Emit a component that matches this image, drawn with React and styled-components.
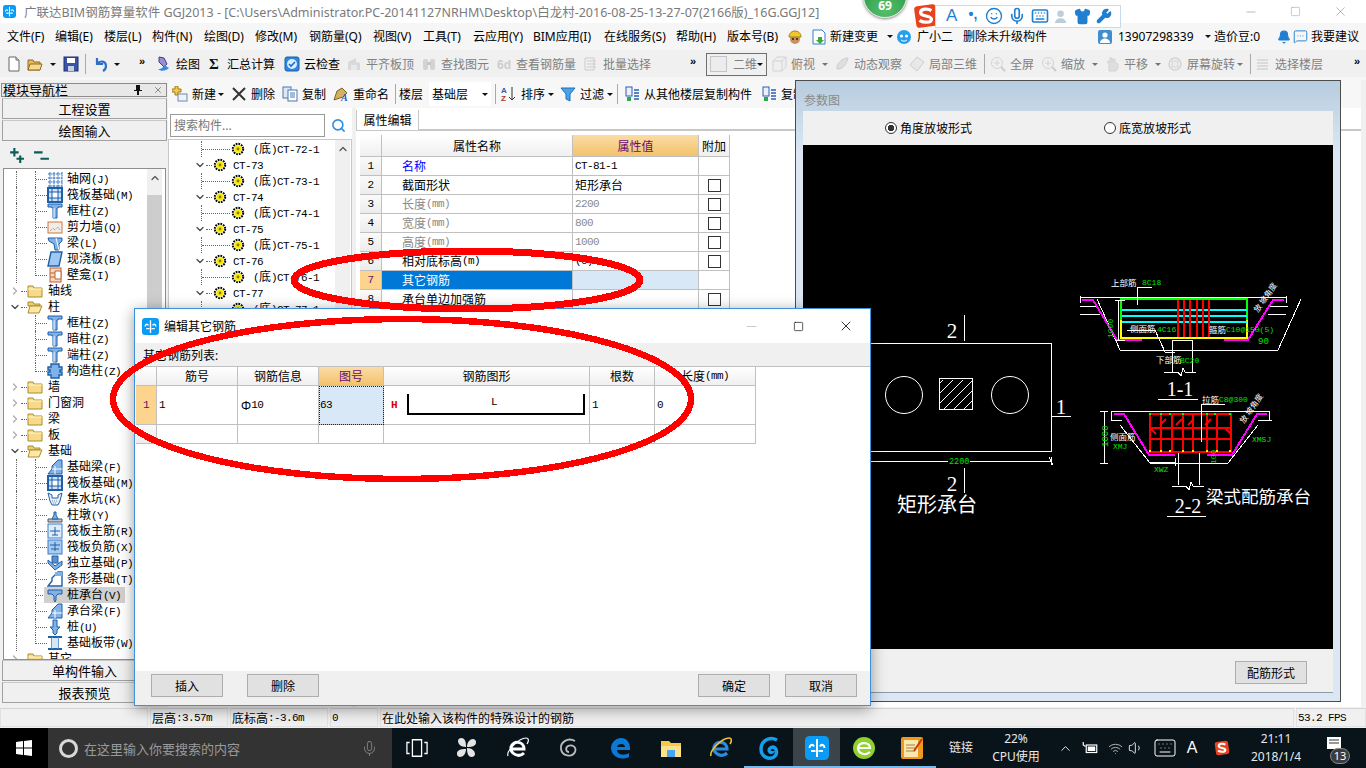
import React from 'react';
import styled, { createGlobalStyle } from 'styled-components';
import { Minus, Square, X, ChevronDown, ChevronRight, ChevronUp, Search, Mic, Bell, MessageSquareMore, Wrench, Shirt, Keyboard, Smile, Volume1, Wifi } from 'lucide-react';

const Global = createGlobalStyle`
    html, body { margin: 0; padding: 0; background: #f0f0f0; overflow: hidden; }
    body { font-family: "Noto Sans", "Noto Sans CJK SC", sans-serif; font-size: 12px; color: #000; }
    * { box-sizing: border-box; }
`;

const Screen = styled.div`
    position: relative;
    display: flex;
    flex-direction: column;
    width: 1366px;
    height: 768px;
    overflow: hidden;
    background: #f0f0f0;
`;

const TitleBar = styled.div`
    display: flex;
    align-items: center;
    height: 23px;
    padding-left: 3px;
    background: #fff;
    white-space: nowrap;
`;

const TitleText = styled.span`
    flex: 1;
    margin-left: 8px;
    font-size: 12.5px;
    color: #7a7a7a;
`;

const WinControls = styled.div`
    display: flex;
    align-items: center;
    color: #8a8a8a;
    padding-right: 18px;
    gap: 32px;
`;

const MenuBar = styled.div`
    display: flex;
    align-items: center;
    height: 27px;
    background: #f6f6f6;
    white-space: nowrap;
`;

const MenuItem = styled.div`
    display: flex;
    align-items: center;
    flex: none;
    gap: ${p => p.$gap || 3}px;
    width: ${p => p.$w}px;
    font-size: 12px;
    line-height: 16px;
`;

const ToolBand = styled.div`
    display: flex;
    align-items: center;
    height: 30px;
    padding: 0 0 2px ${p => p.$pad || 0}px;
    background: linear-gradient(#f0f0f0 90%, #f6f6f6 90%);
    white-space: nowrap;
`;

const Tool = styled.div`
    display: flex;
    align-items: center;
    flex: none;
    gap: 4px;
    width: ${p => p.$w}px;
    height: 24px;
    font-size: 12px;
    color: ${p => (p.$off ? '#808080' : '#000')};
`;

const ToolIcon = styled.span`
    display: flex;
    flex: none;
    opacity: ${p => (p.$off ? 0.4 : 1)};
`;

const Caret = styled.span`
    width: 0;
    height: 0;
    border-left: 3px solid transparent;
    border-right: 3px solid transparent;
    border-top: 3px solid ${p => (p.$off ? '#777' : '#111')};
`;

const Sep = styled.span`
    display: block;
    width: 1px;
    height: 20px;
    background: #a8a8a8;
`;

const MoreMark = styled.span`
    font-family: "Liberation Sans", sans-serif;
    font-size: 11px;
    font-weight: 700;
    letter-spacing: -1px;
    margin-top: -6px;
`;

const ModeCombo = styled.div`
    display: flex;
    align-items: center;
    justify-content: space-between;
    width: 61px;
    height: 23px;
    padding: 0 5px 0 3px;
    border: 1px solid #6f6f6f;
    color: #808080;
`;

const ModeBox = styled.span`
    display: flex;
    align-items: center;
    gap: 6px;
    &::before {
        content: "";
        width: 15px;
        height: 14px;
        background: #ececec;
        border: 1px solid #c4c4c4;
    }
`;

const Workspace = styled.div`
    position: relative;
    display: flex;
    height: 627px;
`;

const LeftNav = styled.div`
    display: flex;
    flex-direction: column;
    flex: none;
    width: 168px;
    padding: 3px 1px 0;
`;

const NavHeader = styled.div`
    display: flex;
    align-items: center;
    height: 14px;
    margin-bottom: 1px;
    padding: 0 3px 0 1px;
    background: #e8e8e8;
    border: 1px solid #8c8c8c;
    font-size: 13px;
    line-height: 12px;
`;

const NavHeaderText = styled.span`
    flex: 1;
`;

const NavButton = styled.div`
    display: flex;
    align-items: center;
    justify-content: center;
    flex: none;
    height: 21px;
    margin: 0 0 1px 1px;
    background: #f0f0f0;
    border: 1px solid #a0a0a0;
    border-top-color: #c8c8c8;
    font-size: 13px;
`;

const NavTools = styled.div`
    display: flex;
    align-items: center;
    gap: 8px;
    flex: none;
    height: 26px;
    padding-left: 7px;
`;

const NavTree = styled.div`
    position: relative;
    flex: none;
    height: 492px;
    margin: 0 1px 0 2px;
    padding-top: 2px;
    overflow: hidden;
    background: #fff;
    border: 1px solid #8e8e8e;
`;

const TreeRow = styled.div`
    position: relative;
    display: flex;
    align-items: center;
    height: 16px;
    padding-left: ${p => p.$pad}px;
    white-space: nowrap;
    &::before {
        content: "";
        display: ${p => (p.$trunk ? 'block' : 'none')};
        position: absolute;
        left: 12px;
        top: 0;
        bottom: 0;
        border-left: 1px dotted #666;
    }
`;

const ChildLink = styled.span`
    position: absolute;
    left: ${p => p.$x}px;
    top: 0;
    width: ${p => p.$w}px;
    height: ${p => (p.$last ? 9 : 16)}px;
    border-left: 1px dotted #666;
    &::after {
        content: "";
        position: absolute;
        left: 0;
        right: 0;
        top: 8px;
        border-top: 1px dotted #666;
    }
`;

const RowLabel = styled.span`
    position: relative;
    display: flex;
    align-items: center;
    height: 16px;
    padding-left: 3px;
    width: ${p => (p.$sel ? '81px' : 'auto')};
    background: ${p => (p.$sel ? '#d0d0d0' : 'transparent')};
`;

const RowText = styled.span`
    margin-left: ${p => p.$gap}px;
    font-size: 12px;
    line-height: 16px;
    color: ${p => p.$color || '#000'};
`;

const Ascii = styled.span`
    font-family: "Liberation Mono", monospace;
    font-size: 11px;
    letter-spacing: -0.6px;
`;

const DotLead = styled.span`
    width: 6px;
    border-top: 1px dotted #666;
`;

const ScrollTrack = styled.div`
    position: absolute;
    top: 0;
    right: ${p => p.$right}px;
    bottom: 0;
    display: flex;
    flex-direction: column;
    align-items: center;
    width: 15px;
    padding-top: 3px;
    background: #f0f0f0;
    color: #555;
`;

const ScrollThumb = styled.span`
    display: block;
    width: 15px;
    height: 300px;
    margin-top: 11px;
    background: #cdcdcd;
`;

const RightSide = styled.div`
    display: flex;
    flex-direction: column;
    flex: none;
    width: 1193px;
`;

const SubBar = styled.div`
    display: flex;
    align-items: center;
    flex: none;
    height: 28px;
    padding-left: 4px;
    background: #f7f7f7;
    white-space: nowrap;
`;

const FloorCombo = styled.div`
    display: flex;
    align-items: center;
    justify-content: space-between;
    width: 62px;
    height: 24px;
    padding: 0 3px 0 3px;
    background: #fff;
`;

const Panes = styled.div`
    display: flex;
    flex: 1;
    gap: 4px;
`;

const ListPane = styled.div`
    flex: none;
    width: 184px;
    background: #fff;
`;

const SearchRow = styled.div`
    display: flex;
    align-items: center;
    height: 31px;
    padding: 6px 0 2px 2px;
`;

const SearchInput = styled.div`
    display: flex;
    align-items: center;
    width: 155px;
    height: 23px;
    padding: 0 0 2px 3px;
    border: 1px solid #9a9a9a;
    color: #777;
    font-size: 12px;
`;

const SearchIcon = styled.span`
    display: flex;
    margin-left: 6px;
    color: #2f8fe0;
`;

const ListTree = styled.div`
    position: relative;
    height: 200px;
    padding-top: 1px;
    overflow: hidden;
    border: 1px solid #c8c8c8;
`;

const PropPane = styled.div`
    flex: 1;
    padding: 2px 0 0 0;
    background: #fff;
`;

const PropTabs = styled.div`
    display: flex;
    height: 20px;
    border-bottom: 1px solid #c8c8c8;
`;

const PropTab = styled.div`
    display: flex;
    align-items: center;
    justify-content: center;
    width: 63px;
    border-right: 1px solid #c8c8c8;
    border-left: 1px solid #c8c8c8;
    margin-bottom: -1px;
    background: #fff;
`;

const PropBody = styled.div`
    padding: 4px 0 0 4px;
    border-top: 1px solid #c8c8c8;
    margin: 0;
`;

const CellGrid = styled.div`
    display: grid;
    grid-template-columns: ${p => p.$cols};
    grid-template-rows: ${p => p.$rows};
    width: fit-content;
`;

const HeadCell = styled.div`
    display: flex;
    align-items: center;
    justify-content: center;
    background: ${p => (p.$hot ? 'linear-gradient(#fbdca5, #f3c26c)' : 'linear-gradient(#fff, #efefef)')};
    border-right: 1px solid #c0c0c0;
    border-bottom: 1px solid #c0c0c0;
    color: ${p => (p.$hot ? '#6a0a78' : '#000')};
    font-size: 12px;
`;

const RowHead = styled.div`
    display: flex;
    align-items: center;
    justify-content: center;
    background: ${p => (p.$hot ? '#fdd48e' : 'linear-gradient(#fafafa, #ececec)')};
    border-right: 1px solid #c0c0c0;
    border-bottom: 1px solid #c0c0c0;
    color: ${p => (p.$hot ? '#6a0a78' : '#000')};
`;

const Cell = styled.div`
    display: flex;
    align-items: center;
    justify-content: ${p => (p.$mid ? 'center' : 'flex-start')};
    padding-left: ${p => p.$pad || 0}px;
    background: ${p => p.$bg || '#fff'};
    border-right: 1px solid #c0c0c0;
    border-bottom: 1px solid #c0c0c0;
    color: ${p => p.$color || '#000'};
    outline: ${p => (p.$focus ? '1px dotted #222' : 'none')};
    outline-offset: -1px;
    white-space: nowrap;
`;

const Check = styled.span`
    display: block;
    width: 13px;
    height: 13px;
    background: #fff;
    border: 1px solid #333;
`;

const ParamWindow = styled.div`
    position: absolute;
    left: 795px;
    top: 0;
    display: flex;
    flex-direction: column;
    width: 546px;
    height: 622px;
    padding: 0 7px;
    background: linear-gradient(#b7ccdf, #dbe8f4 12%);
    border: 1px solid #4c4c4c;
`;

const ParamTitle = styled.div`
    display: flex;
    align-items: center;
    flex: none;
    height: 30px;
    padding: 7px 0 0 1px;
    color: #8a8a8a;
`;

const RadioBand = styled.div`
    display: flex;
    align-items: center;
    flex: none;
    height: 34px;
    padding-left: 82px;
    background: #f0f0f0;
`;

const RadioItem = styled.div`
    display: flex;
    align-items: center;
    gap: 3px;
    width: 219px;
`;

const RadioDot = styled.span`
    width: 12px;
    height: 12px;
    border: 1px solid #333;
    border-radius: 50%;
    background: ${p => (p.$on ? 'radial-gradient(circle, #333 0 3px, #fff 3.5px)' : '#fff')};
`;

const CadCanvas = styled.div`
    flex: none;
    height: 504px;
    background: #000;
    svg { display: block; }
`;

const ParamFoot = styled.div`
    display: flex;
    justify-content: flex-end;
    flex: none;
    height: 44px;
    padding: 12px 26px 0 0;
    background: #f0f0f0;
    border-bottom: 1px solid #8e9aa6;
`;

const PlainButton = styled.div`
    display: flex;
    align-items: center;
    justify-content: center;
    width: 72px;
    height: 23px;
    background: #e1e1e1;
    border: 1px solid #adadad;
    font-size: 12px;
`;

const EditWindow = styled.div`
    position: absolute;
    left: 134px;
    top: 228px;
    display: flex;
    flex-direction: column;
    width: 737px;
    height: 398px;
    background: #fff;
    border: 1px solid #3f90dc;
    box-shadow: 0 3px 14px rgba(0, 0, 0, 0.4);
`;

const EditTitle = styled.div`
    display: flex;
    align-items: center;
    flex: none;
    height: 34px;
    padding-left: 7px;
    gap: 5px;
`;

const EditTitleText = styled.span`
    flex: 1;
    font-size: 12px;
`;

const EditControls = styled.div`
    display: flex;
    align-items: center;
    gap: 34px;
    padding-right: 16px;
`;

const ListCaption = styled.div`
    display: flex;
    align-items: center;
    flex: none;
    height: 23px;
    padding-left: 8px;
    background: #f0f0f0;
`;

const EditBody = styled.div`
    flex: 1;
    padding: 0 0 0 1px;
    border-top: 1px solid #c0c0c0;
`;

const ShapeCell = styled(Cell)`
    padding-left: 7px;
    gap: 9px;
`;

const HookMark = styled.span`
    font-family: "Liberation Mono", monospace;
    font-size: 11px;
    font-weight: 700;
    color: #e00000;
`;

const EditFoot = styled.div`
    display: flex;
    align-items: flex-start;
    justify-content: space-between;
    flex: none;
    height: 34px;
    padding: 3px 13px 0 16px;
    background: #f0f0f0;
`;

const FootGroup = styled.div`
    display: flex;
    gap: ${p => p.$gap}px;
`;

const StatusBar = styled.div`
    display: flex;
    gap: 2px;
    height: 21px;
    padding: 1px 0 1px 0;
    background: #f0f0f0;
`;

const StatusCell = styled.div`
    display: flex;
    align-items: center;
    flex: ${p => (p.$w ? 'none' : 1)};
    width: ${p => p.$w}px;
    padding-left: 1px;
    border: 1px solid #e0e0e0;
    border-top-color: #d4d4d4;
    white-space: nowrap;
`;

const TaskBar = styled.div`
    display: flex;
    align-items: stretch;
    height: 40px;
    background: #08131a;
    color: #fff;
    white-space: nowrap;
`;

const StartButton = styled.div`
    display: flex;
    align-items: center;
    justify-content: center;
    flex: none;
    width: 48px;
    background: #000;
`;

const TaskSearch = styled.div`
    display: flex;
    align-items: center;
    flex: none;
    width: 344px;
    padding: 0 14px 0 11px;
    background: #333;
    color: #9a9a9a;
    font-size: 13px;
`;

const CortanaRing = styled.span`
    flex: none;
    width: 19px;
    height: 19px;
    margin-right: 6px;
    border: 3px solid #d8d8d8;
    border-radius: 50%;
`;

const SearchHint = styled.span`
    flex: 1;
`;

const TaskSlot = styled.div`
    display: flex;
    align-items: center;
    justify-content: center;
    flex: none;
    width: ${p => p.$w}px;
    background: ${p => (p.$active ? '#3b4549' : 'transparent')};
    box-shadow: ${p => (p.$run ? 'inset 0 -2px 0 #76b9ed' : 'none')};
`;

const TrayLetter = styled(TaskSlot)`
    font-family: "Liberation Sans", sans-serif;
    font-size: 16px;
`;

const TaskText = styled.div`
    display: flex;
    flex-direction: column;
    align-items: center;
    justify-content: center;
    flex: none;
    width: ${p => p.$w}px;
    font-size: 12px;
    line-height: 18px;
    color: #e8e8e8;
`;

const NoticeWrap = styled.div`
    position: relative;
    display: flex;
    align-items: center;
    justify-content: center;
    flex: none;
    width: 56px;
    svg { margin-top: -10px; }
`;

const NoticeBadge = styled.span`
    position: absolute;
    left: 24px;
    top: 20px;
    width: 20px;
    height: 16px;
    border-radius: 8px;
    background: #3c3c3c;
    border: 1px solid #888;
    font-size: 11px;
    line-height: 14px;
    text-align: center;
    color: #fff;
`;

const InkLayer = styled.svg`
    position: absolute;
    left: 0;
    top: 0;
    pointer-events: none;
`;

const ScoreBall = styled.div`
    position: absolute;
    left: 863px;
    top: -26px;
    display: flex;
    align-items: flex-end;
    justify-content: center;
    width: 44px;
    height: 44px;
    padding-bottom: 3px;
    border-radius: 50%;
    background: radial-gradient(circle at 50% 85%, #55c06a, #2f9a4a 70%);
    border: 1px solid #d9e6da;
    box-shadow: 0 1px 3px rgba(0, 0, 0, 0.5);
    color: #fff;
    font-size: 12px;
    font-weight: 700;
`;

const SogouBar = styled.div`
    position: absolute;
    left: 913px;
    top: 3px;
    display: flex;
    align-items: center;
`;

const SogouStrip = styled.div`
    display: flex;
    align-items: center;
    gap: 5px;
    height: 23px;
    margin-left: -4px;
    padding: 0 2px 0 10px;
    width: 186px;
    background: #fff;
    border: 1px solid #c6dcee;
    color: #1f7fd0;
`;

const SogouA = styled.span`
    width: 15px;
    font-family: "Liberation Sans", sans-serif;
    font-size: 17px;
    line-height: 20px;
    color: #1f7fd0;
`;

const SogouPunct = styled.span`
    width: 14px;
    font-family: "Liberation Sans", sans-serif;
    font-size: 14px;
    font-weight: 700;
    text-align: center;
    margin-top: -5px;
`;

const FadedIcon = styled.span`
    display: flex;
    opacity: 0.45;
`;

const Sim = ({ children }) => (
    <>
        {String(children).split(/([\x00-\x7f]+)/).map((part, i) =>
            /^[\x00-\x7f]+$/.test(part) ? <Ascii key={i}>{part}</Ascii> : part
        )}
    </>
);

const B = '#1f5fa8';
const L = '#7fb2e8';
const glyphs = {
    newDoc: <><path d="M3 1h7l3 3v11H3z" fill="#fff" stroke="#666" /><path d="M10 1v3h3" fill="#ddd" stroke="#666" /></>,
    open: <><path d="M1 4h5l1 2h6v8H1z" fill="#e6b95e" stroke="#8f6b22" /><path d="M3 8h12l-2 6H1z" fill="#f6d88f" stroke="#8f6b22" /></>,
    save: <><rect x="1" y="1" width="14" height="14" fill="#3a55a8" stroke="#1e2f70" /><rect x="4" y="2" width="8" height="5" fill="#fff" /><rect x="5" y="10" width="6" height="5" fill="#c8d0e8" /></>,
    undo: <path d="M4 2v6h6M4 8c3-4 9-3 9 2 0 2-1 4-3 5" fill="none" stroke="#2f6fc8" strokeWidth="2.2" />,
    brush: <><path d="M3 1l5 1 3 6-3 3-5-5z" fill="#9a8ed0" stroke="#443a8a" /><path d="M2 13c3 3 8 2 11-1-2-1-3-2-4-3l-3 3c-1 1-3 1-4 1z" fill="#3a88e0" /></>,
    sigma: <text x="2" y="13" fontFamily="Liberation Serif, serif" fontWeight="700" fontSize="15" fill="#111">Σ</text>,
    cloud: <><rect x="1" y="1" width="14" height="14" rx="2" fill="#2b87dd" stroke="#1a5ea8" /><circle cx="8" cy="8" r="5" fill="#d7ecff" /><path d="M5 8l2 2 4-4" fill="none" stroke="#1a6fc8" strokeWidth="1.6" /></>,
    level: <><path d="M2 14V6l8-4v4l4 1v7z" fill="#b8b8b8" /><path d="M5 14V9h6v5z" fill="#e0e0e0" /></>,
    binoc: <><rect x="2" y="3" width="5" height="11" rx="2" fill="#a8a8a8" /><rect x="9" y="3" width="5" height="11" rx="2" fill="#a8a8a8" /><rect x="6" y="6" width="4" height="3" fill="#888" /></>,
    rebarQty: <text x="1" y="13" fontFamily="Liberation Sans, sans-serif" fontSize="12" fontWeight="700" fill="#999">6d</text>,
    batch: <><path d="M2 2h9v12H2z" fill="#eee" stroke="#999" /><path d="M4 5h9M4 8h9M4 11h9" stroke="#999" /></>,
    cube: <><path d="M2 5l4-4h9v10l-4 4H2z" fill="#eee" stroke="#aaa" /><path d="M2 5h9v10M11 5l4-4" fill="none" stroke="#aaa" /></>,
    orbit: <path d="M3 13c-1-5 5-11 11-11-1 6-6 12-11 11z" fill="#c4c4c4" stroke="#999" />,
    box3d: <path d="M8 1l7 5-7 9-7-6z" fill="#ddd" stroke="#999" />,
    lens: <><circle cx="7" cy="7" r="5.5" fill="#eef2f6" stroke="#aaa" /><path d="M11 11l4 4" stroke="#999" strokeWidth="2" /><path d="M4 7h6M7 4v6" stroke="#aaa" /></>,
    hand: <path d="M5 15V8l-2-2 2-1 1 1V2h2v4h1V3h2v4h1l2 1v4l-2 3z" fill="#c4c4c4" stroke="#aaa" />,
    rotate: <><circle cx="8" cy="8" r="6" fill="none" stroke="#aaa" strokeWidth="1.5" /><rect x="5" y="5" width="6" height="6" fill="#e4e4e4" stroke="#aaa" /></>,
    layers: <path d="M2 4h11M2 7h11M2 10h11M2 13h11" stroke="#aaa" strokeWidth="1.5" />,
    newItem: <><path d="M3 0h3v3h3v3H6v3H3V6H0V3h3z" fill="#f2c84a" stroke="#9c7c20" /><rect x="6" y="8" width="9" height="7" fill="#eef3fa" stroke="#6b8ab0" /></>,
    cross: <path d="M2 2l12 12M14 2L2 14" stroke="#333" strokeWidth="2" />,
    copy: <><rect x="1" y="1" width="8" height="11" fill="#dce8f6" stroke="#4a78b0" /><rect x="6" y="4" width="9" height="11" fill="#fff" stroke="#4a78b0" /><path d="M8 7h5M8 9h5M8 11h5" stroke="#4a78b0" /></>,
    rename: <><path d="M1 14l3-9 5-3 5 5-4 4z" fill="#d4b060" stroke="#7a6426" /><text x="8" y="15" fontFamily="Liberation Serif, serif" fontStyle="italic" fontWeight="700" fontSize="10" fill="#2b5fb8">A</text></>,
    sort: <><text x="0" y="7" fontFamily="Liberation Sans, sans-serif" fontWeight="700" fontSize="8" fill="#2b5fb8">A</text><text x="0" y="15" fontFamily="Liberation Sans, sans-serif" fontWeight="700" fontSize="8" fill="#b03030">Z</text><path d="M11 1v13M8 11l3 3 3-3" fill="none" stroke="#333" /></>,
    funnel: <path d="M1 2h14l-5 6v7l-4-2V8z" fill="#4aa2e8" stroke="#1f6fb8" />,
    fromFloor: <><rect x="2" y="1" width="6" height="9" fill="#eef" stroke="#2b5fb8" /><rect x="3" y="11" width="4" height="4" fill="#2ea84a" /><path d="M10 4h5M10 7h5M10 10h5M10 13h5" stroke="#2b5fb8" strokeWidth="1.6" /></>,
    plusPlus: <path d="M2 5h8M6 1v8M8 11h7M11.500 8v7" stroke="#0b5b5b" strokeWidth="2" />,
    minusMinus: <path d="M1 5h8M7 11h8" stroke="#0b5b5b" strokeWidth="2" />,
    grid: <path d="M1 3h14M1 7h14M1 11h14M1 15h14M3 1v15M7 1v15M11 1v15M15 1v15" stroke="#2d6cc0" fill="none" strokeDasharray="2 0.600" />,
    raft: <><rect x="1" y="1" width="14" height="14" fill="#cfe2f8" stroke={B} strokeWidth="2" /><rect x="5" y="5" width="6" height="6" fill="#fff" stroke={B} /><path d="M1 5h4M11 5h4M1 11h4M11 11h4M5 1v4M11 1v4M5 11v4M11 11v4" stroke={B} /></>,
    tCol: <><path d="M1 1h14v3H11v1H10v10H6V5H5V4H1z" fill={L} stroke={B} /><path d="M7 5v10" stroke="#fff" /></>,
    shear: <><rect x="1" y="3" width="14" height="11" fill="#f0ece8" stroke="#d07840" /><path d="M3 12l3-3 2 2 3-3 2 3" stroke="#888" strokeDasharray="1 1" fill="none" /></>,
    beam: <><path d="M1 3h14v3l-3 3v6H8l-1-6-5-3z" fill={L} stroke={B} /><path d="M9 3l3 12" stroke="#fff" /></>,
    slab: <path d="M4 1h11l-3 14H1z" fill="#9fc8f2" stroke={B} strokeWidth="1.4" />,
    niche: <><rect x="3" y="1" width="11" height="14" fill="#f4d8c0" stroke="#c06030" /><path d="M8 4h6v8H8z" fill="#fff" stroke="#c06030" /><path d="M3 6h5M3 10h5" stroke="#c06030" /></>,
    gearCol: <path d="M4 1h8v3h3v3h-2v2h2v3h-3v3H4v-3H1V9h2V7H1V4h3z" fill={L} stroke={B} strokeWidth="1.4" />,
    foundBeam: <><path d="M1 15l4-5V7l6-6h4v14z" fill={L} stroke={B} /><path d="M8 15V7M5 10h10" stroke="#fff" /></>,
    pit: <><path d="M1 2l4 2v3h6V4l4-2-2 8-2 4H5l-2-4z" fill="#e4f0fc" stroke={B} /><path d="M5 10h6M6 12h4" stroke="#888" strokeDasharray="1 1" /></>,
    pier: <><path d="M1 12h14v3H1z" fill="#b8c8dc" stroke="#555" /><path d="M5 12l2-4V5h2v3l2 4z" fill={L} stroke={B} /></>,
    mainBar: <><rect x="1" y="1" width="14" height="14" fill="#dfedfb" stroke="#3a7cc8" /><path d="M3 8h10M8 4v8M5 12h6" stroke={B} /></>,
    negBar: <><rect x="1" y="1" width="14" height="14" fill="#a8ccf0" stroke="#3a7cc8" /><path d="M3 6h10M8 3v9M4 10h8" stroke={B} /></>,
    isoFoot: <><path d="M1 8l7 7 7-5V6L8 11 1 5z" fill={L} stroke={B} /><path d="M5 1h6v7H5z" fill="#5a90d0" stroke={B} /></>,
    stripFoot: <><path d="M1 15l4-5V7l6-6h4v14z" fill="#fff" stroke={B} strokeWidth="1.4" /><path d="M8 1h7v4H8z" fill={L} /></>,
    capFoot: <><path d="M1 3h14v4H11l-2 2v4l-1 2-1-2V9L5 7H1z" fill={L} stroke={B} /></>,
    pile: <><path d="M6 1h4v7h3l-3 3v3l-2 2-2-2v-3L3 8h3z" fill={L} stroke={B} /></>,
    band: <><path d="M1 2h14M1 14h14" stroke={B} strokeWidth="2" /><path d="M5 2v12M11 2v12" stroke="#3a7cc8" strokeWidth="1.5" /><rect x="5" y="3" width="6" height="10" fill="#d5e6f8" /></>,
    folder: <><path d="M1 3h5l1 2h8v9H1z" fill="#f6dc88" stroke="#b08a2c" /><path d="M1 6h14" stroke="#fff6c8" /></>,
    folderOpen: <><path d="M1 3h5l1 2h6v2H1z" fill="#eccc78" stroke="#b08a2c" /><path d="M3 7h12l-3 7H1z" fill="#fbe8a8" stroke="#b08a2c" /></>,
    gear: <><circle cx="8" cy="8" r="5.200" fill="none" stroke="#000" strokeWidth="2" strokeDasharray="1.700 1" /><circle cx="8" cy="8" r="3.800" fill="#f5ec00" /><circle cx="8" cy="8" r="1.400" fill="#8a7c00" /></>,
    helmet: <><circle cx="8" cy="10" r="5" fill="#c8915f" /><path d="M2 8c0-8 12-8 12 0z" fill="#f2c62e" stroke="#a08010" /><circle cx="6" cy="10" r="1" fill="#222" /><circle cx="10" cy="10" r="1" fill="#222" /></>,
    docGo: <><path d="M2 1h9l3 3v11H2z" fill="#fff" stroke="#3a7cc8" /><path d="M7 8h4v3h2l-4 4-4-4h2z" fill="#3aa83a" /></>,
    robot: <><circle cx="8" cy="8" r="7" fill="#25a0ef" /><circle cx="5.500" cy="7" r="1.600" fill="#fff" /><circle cx="10.500" cy="7" r="1.600" fill="#fff" /><path d="M5 11c2 1.500 4 1.500 6 0" stroke="#fff" fill="none" /></>,
    account: <><rect x="1" y="1" width="14" height="14" rx="2" fill="#3f8fd0" /><circle cx="8" cy="6" r="2.600" fill="#fff" /><path d="M3 14c0-6 10-6 10 0z" fill="#fff" /></>,
    person: <><circle cx="7" cy="5" r="3.500" fill="#6f93b0" /><path d="M1 15c0-7 12-7 12 0z" fill="#6f93b0" /></>,
    glodon: <><rect x="0" y="0" width="16" height="16" rx="3" fill="#0a9bf5" /><path d="M8 2v12M3 8c0-2 2-3 3-1M13 8c0-2-2-3-3-1M4 10h3M9 10h3" stroke="#fff" strokeWidth="1.300" fill="none" /></>,
};

const Ico = ({ n, s = 16 }) => (
    <svg width={s} height={s} viewBox="0 0 16 16">{glyphs[n]}</svg>
);

const spaced = (items, end) =>
    items.map((it, i) => ({ ...it, w: (items[i + 1] ? items[i + 1].x : end) - it.x }));

const renderTool = (it, i) => {
    if (it.sep) return <Tool key={i} $w={it.w}><Sep /></Tool>;
    if (it.caret) return <Tool key={i} $w={it.w}><Caret $off={it.off} /></Tool>;
    if (it.more) return <Tool key={i} $w={it.w}><MoreMark>»</MoreMark></Tool>;
    if (it.mode) return <Tool key={i} $w={it.w}><ModeCombo><ModeBox>二维</ModeBox><Caret /></ModeCombo></Tool>;
    if (it.floor) return <Tool key={i} $w={it.w}><FloorCombo>基础层<Caret /></FloorCombo></Tool>;
    if (it.plain) return <Tool key={i} $w={it.w}>{it.plain}</Tool>;
    return (
        <Tool key={i} $w={it.w} $off={it.off}>
            <ToolIcon $off={it.off}><Ico n={it.i} /></ToolIcon>
            {it.t}
        </Tool>
    );
};

const mainTools = spaced([
    { x: 6, i: 'newDoc' }, { x: 27, i: 'open' }, { x: 50, caret: 1 }, { x: 63, i: 'save' }, { x: 85, sep: 1 },
    { x: 93, i: 'undo' }, { x: 114, caret: 1 }, { x: 139, more: 1 },
    { x: 156, i: 'brush', t: '绘图' }, { x: 207, i: 'sigma', t: '汇总计算' }, { x: 284, i: 'cloud', t: '云检查' },
    { x: 346, i: 'level', t: '平齐板顶', off: 1 }, { x: 421, i: 'binoc', t: '查找图元', off: 1 },
    { x: 496, i: 'rebarQty', t: '查看钢筋量', off: 1 }, { x: 583, i: 'batch', t: '批量选择', off: 1 },
    { x: 690, more: 1 }, { x: 706, mode: 1 }, { x: 771, i: 'cube', t: '俯视', off: 1 }, { x: 822, caret: 1, off: 1 },
    { x: 834, i: 'orbit', t: '动态观察', off: 1 }, { x: 909, i: 'box3d', t: '局部三维', off: 1 }, { x: 984, sep: 1 },
    { x: 990, i: 'lens', t: '全屏', off: 1 }, { x: 1041, i: 'lens', t: '缩放', off: 1 }, { x: 1092, caret: 1, off: 1 },
    { x: 1104, i: 'hand', t: '平移', off: 1 }, { x: 1155, caret: 1, off: 1 }, { x: 1167, i: 'rotate', t: '屏幕旋转', off: 1 },
    { x: 1237, caret: 1, off: 1 }, { x: 1250, sep: 1 }, { x: 1255, i: 'layers', t: '选择楼层', off: 1 }, { x: 1354, more: 1 },
], 1366);

const subTools = spaced([
    { x: 172, i: 'newItem', t: '新建' }, { x: 218, caret: 1 }, { x: 231, i: 'cross', t: '删除' }, { x: 282, i: 'copy', t: '复制' },
    { x: 333, i: 'rename', t: '重命名' }, { x: 395, sep: 1 }, { x: 399, plain: '楼层' }, { x: 429, floor: 1 }, { x: 495, sep: 1 },
    { x: 501, i: 'sort', t: '排序' }, { x: 548, caret: 1 }, { x: 560, i: 'funnel', t: '过滤' }, { x: 607, caret: 1 },
    { x: 617, sep: 1 }, { x: 624, i: 'fromFloor', t: '从其他楼层复制构件' }, { x: 761, i: 'fromFloor', t: '复制' },
], 810);

const menus = [
    ['文件(F)', 48], ['编辑(E)', 49], ['楼层(L)', 48], ['构件(N)', 52], ['绘图(D)', 51], ['修改(M)', 54], ['钢筋量(Q)', 64],
    ['视图(V)', 50], ['工具(T)', 50], ['云应用(Y)', 60], ['BIM应用(I)', 71], ['在线服务(S)', 72], ['帮助(H)', 51], ['版本号(B)', 60],
];

const navRows = [
    { k: 'c', i: 'grid', t: '轴网(J)', trunk: 1 }, { k: 'c', i: 'raft', t: '筏板基础(M)', trunk: 1 }, { k: 'c', i: 'tCol', t: '框柱(Z)', trunk: 1 },
    { k: 'c', i: 'shear', t: '剪力墙(Q)', trunk: 1 }, { k: 'c', i: 'beam', t: '梁(L)', trunk: 1 }, { k: 'c', i: 'slab', t: '现浇板(B)', trunk: 1 },
    { k: 'c', i: 'niche', t: '壁龛(I)', trunk: 1, last: 1 },
    { k: 'f', t: '轴线' }, { k: 'o', t: '柱' },
    { k: 'c', i: 'tCol', t: '框柱(Z)' }, { k: 'c', i: 'tCol', t: '暗柱(Z)' }, { k: 'c', i: 'tCol', t: '端柱(Z)' }, { k: 'c', i: 'gearCol', t: '构造柱(Z)', last: 1 },
    { k: 'f', t: '墙' }, { k: 'f', t: '门窗洞' }, { k: 'f', t: '梁' }, { k: 'f', t: '板' }, { k: 'o', t: '基础' },
    { k: 'c', i: 'foundBeam', t: '基础梁(F)', trunk: 1 }, { k: 'c', i: 'raft', t: '筏板基础(M)', trunk: 1 }, { k: 'c', i: 'pit', t: '集水坑(K)', trunk: 1 },
    { k: 'c', i: 'pier', t: '柱墩(Y)', trunk: 1 }, { k: 'c', i: 'mainBar', t: '筏板主筋(R)', trunk: 1 }, { k: 'c', i: 'negBar', t: '筏板负筋(X)', trunk: 1 },
    { k: 'c', i: 'isoFoot', t: '独立基础(P)', trunk: 1 }, { k: 'c', i: 'stripFoot', t: '条形基础(T)', trunk: 1 }, { k: 'c', i: 'capFoot', t: '桩承台(V)', trunk: 1, sel: 1 },
    { k: 'c', i: 'foundBeam', t: '承台梁(F)', trunk: 1 }, { k: 'c', i: 'pile', t: '桩(U)', trunk: 1 }, { k: 'c', i: 'band', t: '基础板带(W)', trunk: 1, last: 1 },
    { k: 'f', t: '其它' },
];

const NavTreeRow = ({ r }) => {
    if (r.k === 'c') {
        return (
            <TreeRow $pad={40} $trunk={r.trunk}>
                <ChildLink $x={31} $w={12} $last={r.last} />
                <RowLabel $sel={r.sel}>
                    <Ico n={r.i} />
                    <RowText $gap={4}><Sim>{r.t}</Sim></RowText>
                </RowLabel>
            </TreeRow>
        );
    }
    const Arrow = r.k === 'o' ? ChevronDown : ChevronRight;
    return (
        <TreeRow $pad={5}>
            <Arrow size={12} strokeWidth={2.400} color={r.k === 'o' ? '#444' : '#aaa'} />
            <DotLead />
            <Ico n={r.k === 'o' ? 'folderOpen' : 'folder'} />
            <RowText $gap={5}>{r.t}</RowText>
        </TreeRow>
    );
};

const ListRow = ({ name, child }) => (
    child ? (
        <TreeRow $pad={61}>
            <ChildLink $x={32} $w={29} />
            <Ico n="gear" />
            <RowText $gap={7}><Sim>{name}</Sim></RowText>
        </TreeRow>
    ) : (
        <TreeRow $pad={25}>
            <ChevronDown size={12} strokeWidth={2.400} color="#444" />
            <DotLead />
            <Ico n="gear" />
            <RowText $gap={5}><Sim>{name}</Sim></RowText>
        </TreeRow>
    )
);

const propRows = [
    ['名称', 'CT-81-1', null, '#0000ff'], ['截面形状', '矩形承台', 1], ['长度(mm)', '2200', 1, '#8a8a8a', 1], ['宽度(mm)', '800', 1, '#8a8a8a', 1],
    ['高度(mm)', '1000', 1, '#8a8a8a', 1], ['相对底标高(m)', '(0)', 1], ['其它钢筋', '', null, '#fff', 0, 1], ['承台单边加强筋', '', 1],
];

const Dim = styled.text`
    font-family: "Liberation Mono", monospace;
    font-size: ${p => p.$s || 8}px;
    fill: #00e000;
`;

const Note = styled.text`
    font-family: "Noto Sans CJK SC", sans-serif;
    font-size: ${p => p.$s || 8.500}px;
    fill: #fff;
`;

const Mark = styled.text`
    font-family: "Liberation Serif", serif;
    font-size: ${p => p.$s || 20}px;
    fill: #fff;
    text-anchor: middle;
`;

const Wire = ({ d, c = '#fff', w = 1 }) => (
    <path d={d} fill="none" stroke={c} strokeWidth={w} shapeRendering="crispEdges" />
);

const CadDrawing = () => (
    <svg width="530" height="504" viewBox="803 145 530 504">
        <defs>
            <clipPath id="hatchBox"><rect x="939" y="378" width="34" height="32" /></clipPath>
        </defs>
        {/* 矩形承台 plan */}
        <Wire d="M850 343H1051V451H850" />
        <circle cx="904" cy="395" r="18.500" fill="none" stroke="#fff" />
        <circle cx="1010" cy="395" r="18.500" fill="none" stroke="#fff" />
        <rect x="939.500" y="378.500" width="33" height="31" fill="none" stroke="#fff" />
        <g clipPath="url(#hatchBox)" stroke="#fff">
            {[1323, 1333, 1343, 1353, 1363, 1373].map(c => <line key={c} x1={c - 380} y1="380" x2={c - 410} y2="410" />)}
        </g>
        <Wire d="M964 315V341M1051 416H1071M964 468V493M850 461H1051M1049 457L1053 465M1051 457V465" />
        <Mark x="952" y="338" $s={21}>2</Mark>
        <Mark x="952" y="491" $s={21}>2</Mark>
        <Mark x="1061" y="414" $s={21}>1</Mark>
        <rect x="948" y="455" width="22" height="12" fill="#000" />
        <Dim x="949" y="464" $s={8.500}>2200</Dim>
        <Note x="897" y="512" $s={20}>矩形承台</Note>

        {/* 1-1 section */}
        <Wire d="M1080 297H1286M1080 296V303M1286 296V303" />
        <Wire d="M1097 299L1120 350H1278L1301 299M1080 306H1096M1270 306H1288M1080 314H1100M1268 314H1286" />
        <Wire d="M1082 300H1093L1117 340H1142M1284 300H1273L1248 340H1224" c="#ff00ff" w="2" />
        <Wire d="M1121 320V299H1247V320" c="#00ff00" w="2" />
        <Wire d="M1121 320V338H1247V320" c="#ffff00" w="2" />
        <Wire d="M1122 310H1247M1122 316H1247M1122 322H1247" c="#00ffff" w="2" />
        <Wire d="M1178 300V337M1184 300V337M1190 300V337M1197 300V337M1203 300V337M1209 300V337" c="#ff0000" w="2" />
        <Wire d="M1172 340V372M1192 340V372M1172 340H1192M1164 372H1178L1181 376L1183 368L1185 372H1196" />
        <Wire d="M1152 287H1137V305M1118 300V340M1115 300H1125M1115 340H1125M1127 330H1155L1165 352H1175" />
        <Note x="1111" y="286">上部筋</Note><Dim x="1142" y="285">8C18</Dim>
        <Note x="1130" y="332">侧面筋</Note><Dim x="1157" y="332">4C16</Dim>
        <Note x="1209" y="333">箍筋</Note><Dim x="1226" y="332">C10@150(5)</Dim>
        <Note x="1156" y="363">下部筋</Note><Dim x="1180" y="363">BC20</Dim>
        <Dim x="1258" y="344" $s={9}>90</Dim>
        <Dim transform="translate(1113 338) rotate(-90)">1000</Dim>
        <Note transform="translate(1258 313) rotate(-55)" $s={8}>放 坡角度</Note>
        <Mark x="1180" y="396" $s={20}>1-1</Mark>
        <Wire d="M1158 399H1198" />

        {/* 2-2 section */}
        <Wire d="M1111 411H1269M1104 411V463M1100 411H1108M1100 463H1108M1111 411V420M1269 411V420" />
        <Wire d="M1120 425L1150 463H1228L1258 425M1111 420H1122M1258 420H1272M1150 462H1175M1175 458V466" />
        <Wire d="M1114 414H1124L1149 455H1175M1267 414H1257L1232 455H1207" c="#ff00ff" w="2" />
        <Wire d="M1150 414H1231V452H1150ZM1161 414V452M1172 414V452M1183 414V452M1193 414V452M1207 414V452M1217 414V452M1150 428H1231M1150 439H1231" c="#ff0000" w="2" />
        <g stroke="#ff0000" strokeWidth="2">
            <path d="M1160 425L1166 419M1176 425L1182 419M1188 425L1194 419M1205 425L1211 419M1150 428L1156 434M1225 428L1231 434" />
        </g>
        <g fill="#00ff00">
            {[1150, 1161, 1170, 1183, 1207, 1215, 1230].map(x => <rect key={x} x={x - 1} y="413" width="2" height="2" />)}
        </g>
        <g fill="#ffff00">
            {[1150, 1161, 1170, 1183, 1193, 1207, 1217, 1230].map(x => <rect key={x} x={x - 1} y="450" width="2" height="2" />)}
        </g>
        <Wire d="M1178 453V485M1199 453V485M1172 486H1186L1189 490L1191 482L1193 486H1204M1201 404V442M1201 404H1225" />
        <Note x="1202" y="403">拉筋</Note><Dim x="1219" y="402">C8@300</Dim>
        <Note x="1110" y="440">侧面筋</Note><Dim x="1113" y="449">XMJ</Dim>
        <Dim x="1252" y="442">XMSJ</Dim>
        <Dim x="1154" y="472">XWZ</Dim>
        <Dim transform="translate(1108 447) rotate(-90)" $s={9}>1000</Dim>
        <Dim transform="translate(1216 464) rotate(-90)">100</Dim>
        <Note transform="translate(1244 424) rotate(-55)" $s={8}>放 坡角度</Note>
        <Mark x="1188" y="513" $s={20}>2-2</Mark>
        <Wire d="M1167 516H1206" />
        <Note x="1206" y="503" $s={17.500}>梁式配筋承台</Note>
    </svg>
);

const Win = () => (
    <svg width="18" height="18" viewBox="0 0 18 18" fill="#fff">
        <path d="M1 3l7-1v6.500H1zM9 2l8-1v7.500H9zM1 9.500h7V16l-7-1zM9 9.500h8V17l-8-1z" />
    </svg>
);

const taskGlyphs = {
    view: <path d="M7 3h10v18H7zM4 6H1v12h3M20 6h3v12h-3" fill="none" stroke="#fff" strokeWidth="1.400" />,
    fan: <path d="M12 11C7 11 4 8 4 5s4-4 6-2 2 6 2 8zm1 0c0-5 3-8 6-8s4 4 2 6-6 2-8 2zm0 1c5 0 8 3 8 6s-4 4-6 2-2-6-2-8zm-1 1c0 5-3 8-6 8s-4-4-2-6 6-2 8-2z" fill="#e4e4e4" />,
    ie: <><path d="M5 13h14c0-8-11-9-13-2-1 7 8 11 13 6" fill="none" stroke="#fff" strokeWidth="3" /><path d="M3 20C1 15 14 2 21 2c3 0 3 3 1 6" fill="none" stroke="#fff" strokeWidth="1.200" /></>,
    swirl: <path d="M19 5C12 1 4 6 5 13c1 7 11 9 14 3 2-5-3-8-7-6-3 2-2 6 1 6" fill="none" stroke="#bcbcbc" strokeWidth="1.800" />,
    edge: <path d="M3 13C3 6 8 2 13 2c6 0 9 5 9 10v2H9c0 5 8 6 12 3v4c-6 3-16 2-18-8zm6-2h8c0-4-7-4-8 0z" fill="#0b78d8" />,
    files: <><path d="M2 5h8l2 2h10v14H2z" fill="#f6c94c" /><path d="M2 10h20v11H2z" fill="#fbe28b" /><rect x="8" y="14" width="8" height="7" fill="#45a7f0" /></>,
    ieColor: <><path d="M5 13h14c0-8-11-9-13-2-1 7 8 11 13 6" fill="none" stroke="#2a8be0" strokeWidth="3.200" /><path d="M3 20C1 15 14 2 21 2c3 0 3 3 1 6" fill="none" stroke="#f2c230" strokeWidth="1.600" /></>,
    gapp: <path d="M20 4C12 0 4 5 4 13s8 11 13 8c4-3 3-9-1-10-3 0-5 3-3 5 1 1 3 0 3-1" fill="none" stroke="#159ef0" strokeWidth="3.400" />,
    greenE: <><circle cx="12" cy="12" r="11" fill="#8fd12d" /><path d="M6 12h12c0-6-11-7-12 0 0 6 8 8 12 4" fill="none" stroke="#fff" strokeWidth="2.200" /></>,
    note: <><rect x="1" y="1" width="22" height="22" rx="2" fill="#ef9a1e" /><rect x="4" y="4" width="14" height="17" fill="#fae8ae" /><path d="M6 9h9M6 12h9M6 15h9" stroke="#a08040" /><path d="M14 15L22 3" stroke="#c83a10" strokeWidth="2" /></>,
    plug: <><rect x="7" y="8" width="14" height="10" fill="none" stroke="#fff" strokeWidth="1.600" /><rect x="9" y="10" width="10" height="6" fill="#fff" /><path d="M3 4v4l3 2" stroke="#fff" strokeWidth="1.600" fill="none" /></>,
    sogou: <><rect x="2" y="2" width="20" height="20" rx="3" fill="#e8431f" transform="rotate(-8 12 12)" /><path d="M17 7c-3-2-10-2-10 2 0 4 10 2 10 6 0 4-8 3-11 1" fill="none" stroke="#fff" strokeWidth="3" /></>,
};

const TaskIco = ({ n, s = 24 }) => (
    <svg width={s} height={s} viewBox="0 0 24 24">{taskGlyphs[n]}</svg>
);

const EDIT_COLS = '21px 81px 81px 65px 206px 65px 101px';

const App = () => (
    <Screen>
        <Global />
        <TitleBar>
            <Ico n="glodon" s={13} />
            <TitleText>广联达BIM钢筋算量软件 GGJ2013 - [C:\Users\Administrator.PC-20141127NRHM\Desktop\白龙村-2016-08-25-13-27-07(2166版)_16G.GGJ12]</TitleText>
            <WinControls>
                <Minus size={14} strokeWidth={1} />
                <Square size={11} strokeWidth={1} />
                <X size={15} strokeWidth={1} />
            </WinControls>
        </TitleBar>

        <MenuBar>
            <MenuItem $w={7} />
            {menus.map(([t, w]) => <MenuItem key={t} $w={w}>{t}</MenuItem>)}
            <MenuItem $w={24}><Ico n="helmet" /></MenuItem>
            <MenuItem $w={76}><Ico n="docGo" /><span>新建变更</span></MenuItem>
            <MenuItem $w={9}><Caret /></MenuItem>
            <MenuItem $w={67} $gap={5}><Ico n="robot" />广小二</MenuItem>
            <MenuItem $w={134}>删除未升级构件</MenuItem>
            <MenuItem $w={117} $gap={5}><Ico n="account" />13907298339&nbsp;&nbsp;<Caret /></MenuItem>
            <MenuItem $w={63}>造价豆:0</MenuItem>
            <MenuItem $w={16}><Bell size={14} color="#1f7fd0" fill="#1f7fd0" /></MenuItem>
            <MenuItem $w={18}><MessageSquareMore size={15} color="#1f7fd0" strokeWidth={1.500} /></MenuItem>
            <MenuItem $w={50}>我要建议</MenuItem>
        </MenuBar>

        <ToolBand $pad={6}>{mainTools.map(renderTool)}</ToolBand>

        <Workspace>
            <LeftNav>
                <NavHeader>
                    <NavHeaderText>模块导航栏</NavHeaderText>
                    <svg width="10" height="10" viewBox="0 0 10 10" style={{ marginRight: 10 }}><path d="M3 0h4v5h2v1H6v4H4V6H1V5h2z" fill="#111" /></svg>
                    <X size={10} strokeWidth={1} />
                </NavHeader>
                <NavButton>工程设置</NavButton>
                <NavButton>绘图输入</NavButton>
                <NavTools>
                    <Ico n="plusPlus" s={17} />
                    <Ico n="minusMinus" s={17} />
                </NavTools>
                <NavTree>
                    {navRows.map((r, i) => <NavTreeRow key={i} r={r} />)}
                    <ScrollTrack $right={3}>
                        <ChevronUp size={12} strokeWidth={2.500} />
                        <ScrollThumb />
                    </ScrollTrack>
                </NavTree>
                <NavButton>单构件输入</NavButton>
                <NavButton>报表预览</NavButton>
            </LeftNav>

            <RightSide>
                <SubBar>{subTools.map(renderTool)}</SubBar>
                <Panes>
                    <ListPane>
                        <SearchRow>
                            <SearchInput>搜索构件...</SearchInput>
                            <SearchIcon><Search size={15} strokeWidth={2.500} /></SearchIcon>
                        </SearchRow>
                        <ListTree>
                            <ListRow child name="(底)CT-72-1" />
                            {[73, 74, 75, 76, 77].map(n => (
                                <React.Fragment key={n}>
                                    <ListRow name={`CT-${n}`} />
                                    <ListRow child name={`(底)CT-${n}-1`} />
                                </React.Fragment>
                            ))}
                            <ScrollTrack $right={1}>
                                <ChevronUp size={12} strokeWidth={2.500} />
                            </ScrollTrack>
                        </ListTree>
                    </ListPane>

                    <PropPane>
                        <PropTabs><PropTab>属性编辑</PropTab></PropTabs>
                        <PropBody>
                            <CellGrid $cols="22px 191px 126px 31px" $rows="22px repeat(8, 19px)">
                                <HeadCell />
                                <HeadCell>属性名称</HeadCell>
                                <HeadCell $hot>属性值</HeadCell>
                                <HeadCell>附加</HeadCell>
                                {propRows.map(([name, val, chk, color, dim, sel], i) => (
                                    <React.Fragment key={name}>
                                        <RowHead $hot={sel}><Sim>{String(i + 1)}</Sim></RowHead>
                                        <Cell $pad={20} $bg={sel ? '#0078d7' : '#fff'} $color={color}><Sim>{name}</Sim></Cell>
                                        <Cell $pad={2} $bg={sel ? '#d8e8f7' : '#fff'} $color={dim ? '#8a8a8a' : '#000'}><Sim>{val}</Sim></Cell>
                                        <Cell $mid>{chk ? <Check /> : null}</Cell>
                                    </React.Fragment>
                                ))}
                            </CellGrid>
                        </PropBody>
                    </PropPane>
                </Panes>
            </RightSide>

            <ParamWindow>
                <ParamTitle>参数图</ParamTitle>
                <RadioBand>
                    <RadioItem><RadioDot $on />角度放坡形式</RadioItem>
                    <RadioItem><RadioDot />底宽放坡形式</RadioItem>
                </RadioBand>
                <CadCanvas><CadDrawing /></CadCanvas>
                <ParamFoot><PlainButton>配筋形式</PlainButton></ParamFoot>
            </ParamWindow>

            <EditWindow>
                <EditTitle>
                    <Ico n="glodon" s={17} />
                    <EditTitleText>编辑其它钢筋</EditTitleText>
                    <EditControls>
                        <Minus size={15} strokeWidth={1} color="#aaa" />
                        <Square size={11} strokeWidth={1.400} />
                        <X size={16} strokeWidth={1.200} />
                    </EditControls>
                </EditTitle>
                <ListCaption>其它钢筋列表:</ListCaption>
                <EditBody>
                    <CellGrid $cols={EDIT_COLS} $rows="19px 39px 19px">
                        <HeadCell />
                        <HeadCell>筋号</HeadCell>
                        <HeadCell>钢筋信息</HeadCell>
                        <HeadCell $hot>图号</HeadCell>
                        <HeadCell>钢筋图形</HeadCell>
                        <HeadCell>根数</HeadCell>
                        <HeadCell><Sim>长度(mm)</Sim></HeadCell>

                        <RowHead $hot><Sim>1</Sim></RowHead>
                        <Cell $pad={2}><Sim>1</Sim></Cell>
                        <Cell $pad={3}><Sim>Φ10</Sim></Cell>
                        <Cell $pad={1} $bg="#d8e8f7" $focus><Sim>63</Sim></Cell>
                        <ShapeCell>
                            <HookMark>H</HookMark>
                            <svg width="178" height="24" viewBox="0 0 178 24">
                                <path d="M1 1V21H177V1" fill="none" stroke="#000" strokeWidth="2" />
                                <text x="84" y="12" fontFamily="Liberation Mono, monospace" fontSize="11">L</text>
                            </svg>
                        </ShapeCell>
                        <Cell $pad={2}><Sim>1</Sim></Cell>
                        <Cell $pad={2}><Sim>0</Sim></Cell>

                        <RowHead /><Cell /><Cell /><Cell /><Cell /><Cell /><Cell />
                    </CellGrid>
                </EditBody>
                <EditFoot>
                    <FootGroup $gap={24}>
                        <PlainButton>插入</PlainButton>
                        <PlainButton>删除</PlainButton>
                    </FootGroup>
                    <FootGroup $gap={15}>
                        <PlainButton>确定</PlainButton>
                        <PlainButton>取消</PlainButton>
                    </FootGroup>
                </EditFoot>
            </EditWindow>
        </Workspace>

        <StatusBar>
            <StatusCell $w={148} />
            <StatusCell $w={78}><Sim>层高:3.57m</Sim></StatusCell>
            <StatusCell $w={98}><Sim>底标高:-3.6m</Sim></StatusCell>
            <StatusCell $w={48}><Sim>0</Sim></StatusCell>
            <StatusCell>在此处输入该构件的特殊设计的钢筋</StatusCell>
            <StatusCell $w={70}><Sim>53.2 FPS</Sim></StatusCell>
        </StatusBar>

        <TaskBar>
            <StartButton><Win /></StartButton>
            <TaskSearch>
                <CortanaRing />
                <SearchHint>在这里输入你要搜索的内容</SearchHint>
                <Mic size={17} strokeWidth={1.200} color="#8c8c8c" />
            </TaskSearch>
            <TaskSlot $w={49}><TaskIco n="view" s={22} /></TaskSlot>
            <TaskSlot $w={50}><TaskIco n="fan" /></TaskSlot>
            <TaskSlot $w={52}><TaskIco n="ie" /></TaskSlot>
            <TaskSlot $w={50}><TaskIco n="swirl" /></TaskSlot>
            <TaskSlot $w={53}><TaskIco n="edge" /></TaskSlot>
            <TaskSlot $w={49}><TaskIco n="files" /></TaskSlot>
            <TaskSlot $w={49}><TaskIco n="ieColor" /></TaskSlot>
            <TaskSlot $w={49} $run><TaskIco n="gapp" /></TaskSlot>
            <TaskSlot $w={47} $active $run><Ico n="glodon" s={24} /></TaskSlot>
            <TaskSlot $w={48} $run><TaskIco n="greenE" /></TaskSlot>
            <TaskSlot $w={48} $run><TaskIco n="note" /></TaskSlot>
            <TaskText $w={50}>链接</TaskText>
            <TaskText $w={60}><span>22%</span><span>CPU使用</span></TaskText>
            <TaskSlot $w={6} />
            <TaskSlot $w={26}><ChevronUp size={15} strokeWidth={1.400} /></TaskSlot>
            <TaskSlot $w={24}><TaskIco n="plug" s={18} /></TaskSlot>
            <TaskSlot $w={26}><Wifi size={15} strokeWidth={1.400} color="#c4c4c4" /></TaskSlot>
            <TaskSlot $w={16}><Volume1 size={16} strokeWidth={1.300} /></TaskSlot>
            <TaskSlot $w={42}><Keyboard size={24} strokeWidth={1} /></TaskSlot>
            <TrayLetter $w={12}>A</TrayLetter>
            <TaskSlot $w={48}><TaskIco n="sogou" s={16} /></TaskSlot>
            <TaskText $w={60}><span>21:11</span><span>2018/1/4</span></TaskText>
            <NoticeWrap>
                <svg width="16" height="14" viewBox="0 0 16 14"><path d="M1 1h14v12H1z" fill="#fff" /><path d="M3 4h10M3 7h10" stroke="#333" /></svg>
                <NoticeBadge>13</NoticeBadge>
            </NoticeWrap>
        </TaskBar>

        <ScoreBall>69</ScoreBall>
        <SogouBar>
            <TaskIco n="sogou" s={26} />
            <SogouStrip>
                <SogouA>A</SogouA>
                <SogouPunct>•,</SogouPunct>
                <Smile size={18} strokeWidth={1.800} />
                <Mic size={18} strokeWidth={2.200} />
                <Keyboard size={18} strokeWidth={2.200} />
                <FadedIcon><Ico n="person" s={15} /></FadedIcon>
                <Shirt size={17} fill="#1f7fd0" />
                <Wrench size={16} fill="#1f7fd0" />
            </SogouStrip>
        </SogouBar>

        <InkLayer width="1366" height="768" viewBox="0 0 1366 768">
            <ellipse cx="467" cy="280" rx="173" ry="29" fill="none" stroke="#ff0000" strokeWidth="7" shapeRendering="crispEdges" />
            <ellipse cx="402" cy="399" rx="289" ry="80" fill="none" stroke="#ff0000" strokeWidth="6.500" shapeRendering="crispEdges" />
        </InkLayer>
    </Screen>
);

export default App;
